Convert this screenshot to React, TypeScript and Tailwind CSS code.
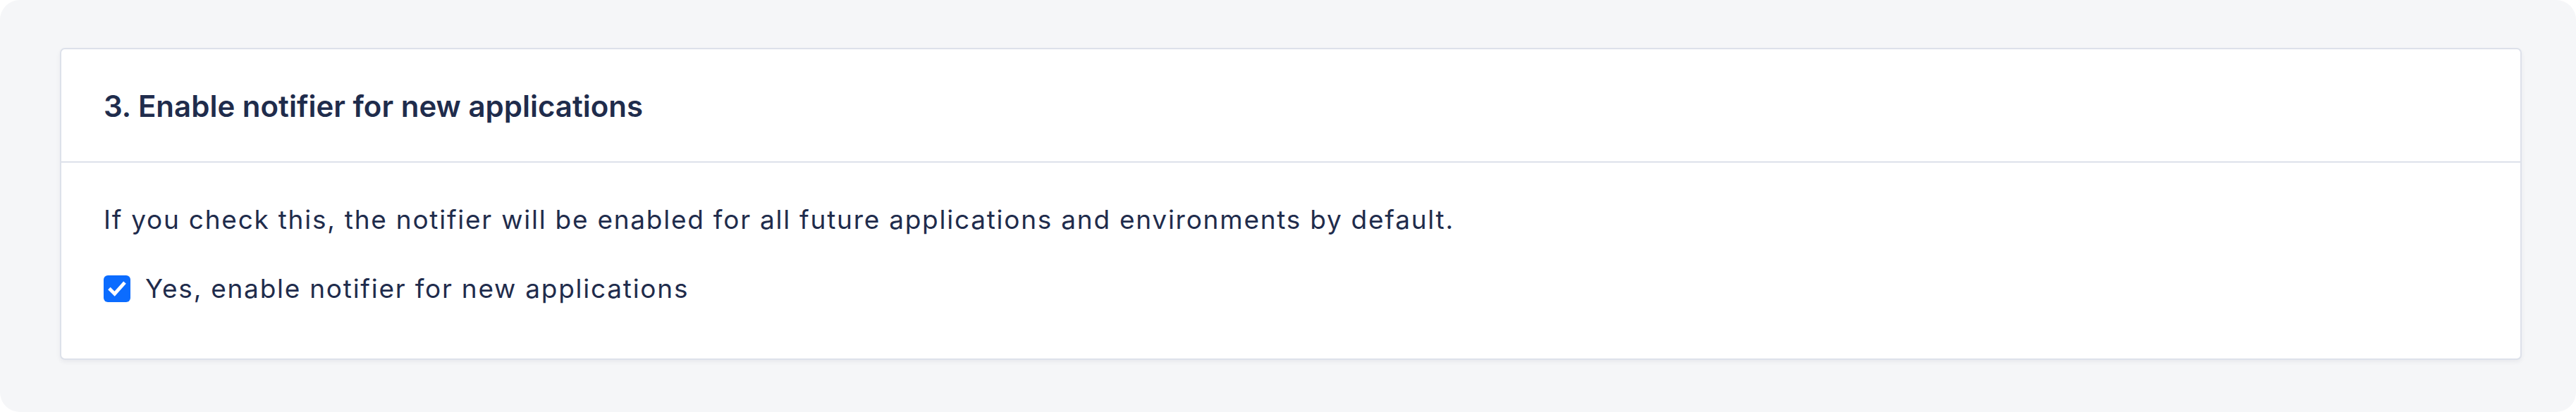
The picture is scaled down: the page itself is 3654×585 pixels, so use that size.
import React from "react";

function CheckIcon() {
  return (
    <svg viewBox="0 0 16 16" className="w-[30px] h-[30px]" fill="none">
      <path d="M3 8.6l3.2 3.2L13 4.2" stroke="white" strokeWidth="2.6" strokeLinecap="square" strokeLinejoin="miter" />
    </svg>
  );
}

export default function App() {
  return (
    <div className="w-[3654px] h-[585px] bg-white" style={{ fontFamily: "Inter, 'Noto Sans', sans-serif" }}>
      <div className="w-full h-full rounded-[28px] bg-[#f5f6f8] pt-[68px] pl-[85px] pr-[77px]">
        <div className="rounded-[7px] border-2 border-[#dde1ea] bg-white shadow-[0_3px_6px_rgba(30,42,74,0.06)] text-[#1f2c4c]">
          <div className="h-[161px] flex items-center px-[60px] border-b-2 border-[#dde1ea]">
            <h2 className="text-[42px] leading-[60px] font-semibold pt-[3px]">3. Enable notifier for new applications</h2>
          </div>
          <div className="px-[60px] pt-[53px] pb-[71px] flex flex-col gap-[42px]">
            <p className="text-[37px] leading-[56px] tracking-[1.75px]">
              If you check this, the notifier will be enabled for all future applications and environments by default.
            </p>
            <label className="flex items-center gap-[21px] text-[37px] leading-[56px] tracking-[1.75px]">
              <span className="w-[38px] h-[38px] rounded-[6px] bg-[#0b6cff] flex items-center justify-center">
                <CheckIcon />
              </span>
              Yes, enable notifier for new applications
            </label>
          </div>
        </div>
      </div>
    </div>
  );
}
